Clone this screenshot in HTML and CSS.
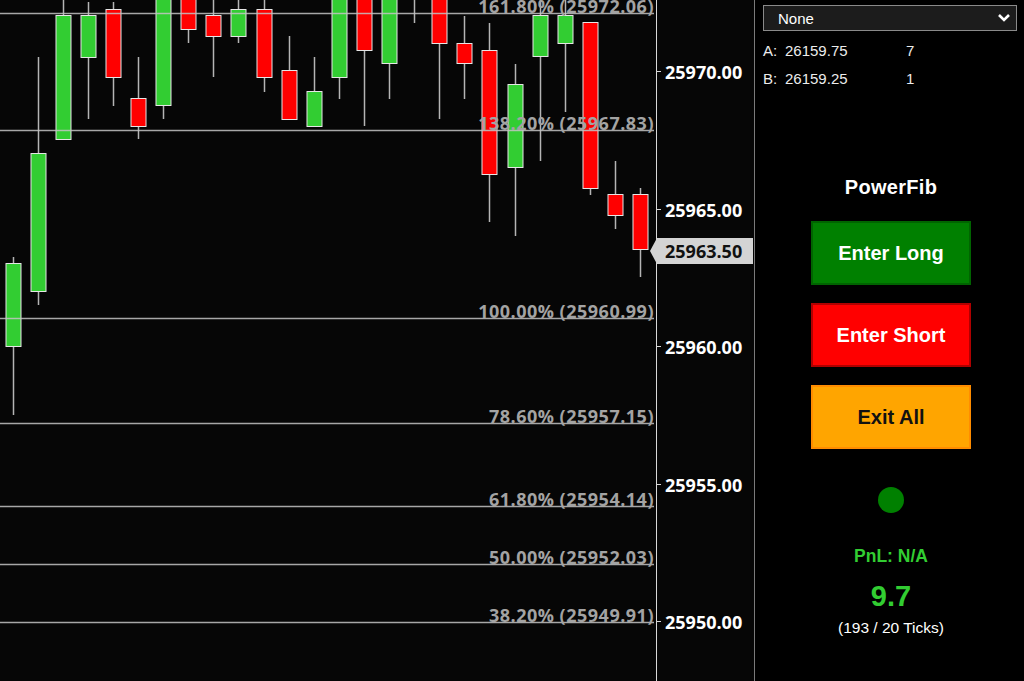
FILE: index.html
```html
<!DOCTYPE html>
<html lang="en">
<head>
    <meta charset="UTF-8">
    <meta name="viewport" content="width=device-width, initial-scale=1.0">
    <title>PowerFib</title>
    <link rel="stylesheet" href="styles.css">
</head>
<body>
    <div class="app">
        <div class="chart">
            <svg id="chart" width="754" height="681" viewBox="0 0 754 681"></svg>
        </div>

        <aside class="panel">
            <div class="select">
                <span>None</span>
                <svg class="chevron" width="14" height="10" viewBox="0 0 14 10">
                    <path d="M2 2 L7 7 L12 2" fill="none" stroke="#fff" stroke-width="2.6"/>
                </svg>
            </div>

            <div class="quote">
                <span>A:</span><span>26159.75</span><span>7</span>
                <span>B:</span><span>26159.25</span><span>1</span>
            </div>

            <div class="title">PowerFib</div>

            <button class="btn btn-long">Enter Long</button>
            <button class="btn btn-short">Enter Short</button>
            <button class="btn btn-exit">Exit All</button>

            <div class="status-dot"></div>

            <div class="pnl">PnL: N/A</div>
            <div class="ratio">9.7</div>
            <div class="ticks">(193 / 20 Ticks)</div>
        </aside>
    </div>

    <script>
        const svg = document.getElementById('chart');
        const NS = 'http://www.w3.org/2000/svg';

        // 25970.00 sits at y=72, 5 points = 137.5px
        function y(price) {
            return 72 + (25970 - price) * 27.5;
        }

        function el(name, attrs, text) {
            const node = document.createElementNS(NS, name);
            for (const k in attrs) node.setAttribute(k, attrs[k]);
            if (text) node.textContent = text;
            svg.appendChild(node);
            return node;
        }

        // candles: body top, body bottom, wick top, wick bottom, up?
        const candles = [
            [263, 346, 257, 415, 1],
            [153, 291, 57, 305, 1],
            [15, 139, -5, 139, 1],
            [15, 57, 2, 119, 1],
            [9, 77, 2, 106, 0],
            [98, 126, 57, 139, 0],
            [-5, 105, -5, 119, 1],
            [-5, 29, -5, 43, 0],
            [15, 36, -5, 77, 0],
            [9, 36, -5, 43, 1],
            [9, 77, -5, 92, 0],
            [70, 119, 36, 119, 0],
            [91, 126, 57, 126, 1],
            [-5, 77, -5, 99, 1],
            [-5, 50, -5, 126, 0],
            [-5, 63, -5, 99, 1],
            [-20, -10, -5, 23, 1],
            [-5, 43, -5, 119, 0],
            [43, 63, 16, 99, 0],
            [50, 174, 23, 222, 0],
            [84, 167, 64, 236, 1],
            [15, 56, -5, 161, 1],
            [15, 43, -5, 112, 1],
            [22, 188, 22, 195, 0],
            [194, 215, 161, 229, 0],
            [194, 249, 188, 277, 0]
        ];

        candles.forEach((c, i) => {
            const cx = Math.round(12.5 + i * 25.1) + 0.5;
            el('line', { x1: cx, x2: cx, y1: c[2], y2: c[3], class: 'wick' });
            el('rect', {
                x: cx - 7.5, y: c[0] + 0.5, width: 15, height: c[1] - c[0],
                class: c[4] ? 'body up' : 'body down'
            });
        });

        // fib levels
        const fibs = [
            ['161.80%', 25972.06],
            ['138.20%', 25967.83],
            ['100.00%', 25960.99],
            ['78.60%', 25957.15],
            ['61.80%', 25954.14],
            ['50.00%', 25952.03],
            ['38.20%', 25949.91]
        ];

        fibs.forEach(f => {
            const ly = Math.round(y(f[1])) - 1.5;
            el('line', { x1: 0, x2: 654, y1: ly, y2: ly, class: 'fib-line' });
            el('text', { x: 654, y: ly - 1, class: 'fib-label' }, `${f[0]} (${f[1].toFixed(2)})`);
        });

        // price axis
        el('line', { x1: 656.5, x2: 656.5, y1: 0, y2: 681, class: 'axis' });
        [25970, 25965, 25960, 25955, 25950].forEach(p => {
            const py = Math.round(y(p)) - 0.5;
            el('line', { x1: 657, x2: 661, y1: py, y2: py, class: 'axis' });
            el('text', { x: 665, y: py + 7, class: 'price' }, p.toFixed(2));
        });

        // last price marker
        const last = Math.round(y(25963.50));
        el('polygon', {
            points: `650,${last} 657,${last - 13} 753,${last - 13} 753,${last + 13} 657,${last + 13}`,
            class: 'last-box'
        });
        el('text', { x: 665, y: last + 7, class: 'price last' }, '25963.50');
    </script>
</body>
</html>
```

FILE: styles.css
```css
body {
    margin: 0;
    background: #000;
    font-family: 'Liberation Sans', Arial, sans-serif;
    overflow: hidden;
}
.app {
    display: flex;
    width: 1024px;
    height: 681px;
}
.chart {
    width: 754px;
    height: 681px;
    background: #060606;
    border-right: 1px solid #7a7a7a;
}
.chart svg {
    display: block;
}
.wick {
    stroke: #b4b4b4;
    stroke-width: 1.5;
}
.body {
    stroke: #e6e6e6;
    stroke-width: 1;
}
.body.up {
    fill: #32cd32;
}
.body.down {
    fill: #ff0000;
}
.fib-line {
    stroke: #c4c4c4;
    stroke-width: 1.5;
    opacity: 0.85;
}
.fib-label {
    fill: #a3a3a3;
    font-family: 'Open Sans', 'Noto Sans', sans-serif;
    font-weight: 700;
    font-size: 18px;
    letter-spacing: 0.5px;
    text-anchor: end;
}
.axis {
    stroke: #d8d8d8;
    stroke-width: 1;
}
.price {
    fill: #fff;
    font-family: 'Open Sans', 'Noto Sans', sans-serif;
    font-weight: 700;
    font-size: 18px;
}
.price.last {
    fill: #111;
}
.last-box {
    fill: #d4d4d4;
}

.panel {
    flex: 1;
    display: flex;
    flex-direction: column;
    align-items: center;
    padding: 5px 0 0 3px;
    color: #fff;
}
.select {
    align-self: stretch;
    display: flex;
    align-items: center;
    justify-content: space-between;
    height: 24px;
    margin: 0 7px 0 5px;
    padding: 0 5px 0 14px;
    background: #1c1c1c;
    border: 1px solid #8a8a8a;
    font-size: 15px;
}
.quote {
    align-self: stretch;
    display: grid;
    grid-template-columns: 22px 121px auto;
    grid-auto-rows: 28px;
    align-items: center;
    padding-left: 5px;
    margin-top: 5px;
    font-size: 15px;
    color: #ececec;
}
.title {
    margin-top: 84px;
    line-height: 22px;
    font-size: 20px;
    font-weight: bold;
    letter-spacing: 0.3px;
}
.btn {
    width: 160px;
    height: 64px;
    margin-top: 18px;
    border: 2px solid;
    font-family: 'Liberation Sans', Arial, sans-serif;
    font-size: 20px;
    font-weight: bold;
    color: #fff;
    cursor: pointer;
}
.btn-long {
    margin-top: 23px;
    background: #008000;
    border-color: #006400;
}
.btn-short {
    background: #ff0000;
    border-color: #b00000;
}
.btn-exit {
    background: #ffa500;
    border-color: #ff8c00;
    color: #111;
}
.status-dot {
    width: 26px;
    height: 26px;
    margin-top: 38px;
    border-radius: 50%;
    background: #008000;
}
.pnl {
    margin-top: 33px;
    line-height: 20px;
    font-size: 17.5px;
    font-weight: bold;
    color: #32cd32;
}
.ratio {
    margin-top: 13px;
    line-height: 34px;
    font-size: 29px;
    font-weight: bold;
    color: #32cd32;
}
.ticks {
    margin-top: 6px;
    line-height: 18px;
    font-size: 15.5px;
}
```
